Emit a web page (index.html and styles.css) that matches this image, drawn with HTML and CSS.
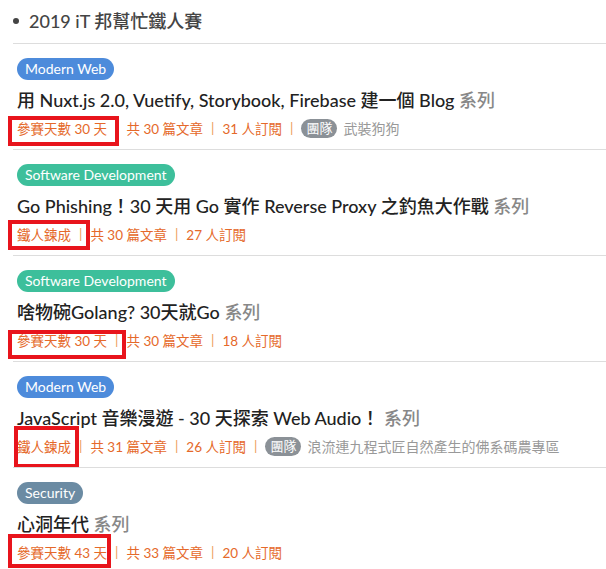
FILE: index.html
```html
<!DOCTYPE html>
<html lang="zh-Hant">
<head>
  <meta charset="UTF-8" />
  <meta name="viewport" content="width=device-width, initial-scale=1.0"/>
  <title>2019 iT 邦幫忙鐵人賽</title>
  <link rel="stylesheet" href="styles.css">
</head>
<body>
  <section class="ironman">
    <h2 class="ironman-title">2019 iT 邦幫忙鐵人賽</h2>

    <!-- Series list -->
    <div class="series">
      <div class="series-item">
        <span class="tag tag-web">Modern Web</span>
        <h3 class="series-title">用 Nuxt.js 2.0, Vuetify, Storybook, Firebase 建一個 Blog <span class="suffix">系列</span></h3>
        <div class="series-meta">
          <span>參賽天數 30 天</span><span class="sep">|</span>
          <span>共 30 篇文章</span><span class="sep">|</span>
          <span>31 人訂閱</span><span class="sep">|</span>
          <span class="team">團隊</span><span class="team-name">武裝狗狗</span>
        </div>
        <span class="mark mark-1"></span>
      </div>

      <div class="series-item">
        <span class="tag tag-dev">Software Development</span>
        <h3 class="series-title">Go Phishing！30 天用 Go 實作 Reverse Proxy 之釣魚大作戰 <span class="suffix">系列</span></h3>
        <div class="series-meta">
          <span>鐵人鍊成</span><span class="sep">|</span>
          <span>共 30 篇文章</span><span class="sep">|</span>
          <span>27 人訂閱</span>
        </div>
        <span class="mark mark-2"></span>
      </div>

      <div class="series-item">
        <span class="tag tag-dev">Software Development</span>
        <h3 class="series-title">啥物碗Golang? 30天就Go <span class="suffix">系列</span></h3>
        <div class="series-meta">
          <span>參賽天數 30 天</span><span class="sep">|</span>
          <span>共 30 篇文章</span><span class="sep">|</span>
          <span>18 人訂閱</span>
        </div>
        <span class="mark mark-3"></span>
      </div>

      <div class="series-item">
        <span class="tag tag-web">Modern Web</span>
        <h3 class="series-title">JavaScript 音樂漫遊 - 30 天探索 Web Audio！ <span class="suffix">系列</span></h3>
        <div class="series-meta">
          <span>鐵人鍊成</span><span class="sep">|</span>
          <span>共 31 篇文章</span><span class="sep">|</span>
          <span>26 人訂閱</span><span class="sep">|</span>
          <span class="team">團隊</span><span class="team-name">浪流連九程式匠自然產生的佛系碼農專區</span>
        </div>
        <span class="mark mark-4"></span>
      </div>

      <div class="series-item">
        <span class="tag tag-sec">Security</span>
        <h3 class="series-title">心洞年代 <span class="suffix">系列</span></h3>
        <div class="series-meta">
          <span>參賽天數 43 天</span><span class="sep">|</span>
          <span>共 33 篇文章</span><span class="sep">|</span>
          <span>20 人訂閱</span>
        </div>
        <span class="mark mark-5"></span>
      </div>
    </div>
  </section>
</body>
</html>
```

FILE: styles.css
```css
* {
  margin: 0;
  padding: 0;
  box-sizing: border-box;
}

body {
  background-color: #fff;
  color: #333;
  font-family: Lato, "Noto Sans CJK TC", sans-serif;
  overflow: hidden;
}

.ironman {
  margin-left: 13px;
}

.ironman-title {
  display: flex;
  align-items: center;
  gap: 10px;
  padding: 8px 0 9px;
  font-size: 18px;
  line-height: 26px;
  font-weight: 500;
  color: #444;
}

.ironman-title::before {
  content: "";
  width: 6px;
  height: 6px;
  border-radius: 50%;
  background-color: #444;
}

.series-item {
  position: relative;
  border-top: 1px solid #ddd;
  padding: 14px 4px 11px;
}

.tag {
  display: inline-block;
  height: 22px;
  line-height: 22px;
  padding: 0 8px;
  border-radius: 11px;
  font-size: 14px;
  color: #fff;
  vertical-align: top;
}

.tag-web {
  background-color: #4d8bdb;
}

.tag-dev {
  background-color: #3dbf9b;
}

.tag-sec {
  background-color: #6b8ba3;
}

.series-title {
  margin-top: 8px;
  font-size: 18px;
  line-height: 24px;
  font-weight: 500;
  color: #222;
}

.series-title .suffix {
  color: #888;
}

.series-meta {
  display: flex;
  align-items: center;
  margin-top: 6px;
  height: 20px;
  font-size: 13.5px;
  color: #e5692a;
  white-space: nowrap;
}

.sep {
  margin: 0 8px;
  color: #ee9a5c;
}

.team {
  height: 19px;
  line-height: 19px;
  padding: 0 5px;
  border-radius: 10px;
  background-color: #8b9197;
  color: #fff;
  font-size: 13px;
}

.team-name {
  margin-left: 6px;
  font-size: 14px;
  color: #999;
}

/* red annotation boxes */
.mark {
  position: absolute;
  left: -5px;
  border: 4px solid #e8141c;
}

.mark-1 {
  top: 72px;
  width: 111px;
  height: 30px;
}

.mark-2 {
  top: 70px;
  width: 82px;
  height: 30px;
}

.mark-3 {
  top: 74px;
  width: 118px;
  height: 29px;
}

.mark-4 {
  top: 64px;
  left: 1px;
  width: 65px;
  height: 42px;
}

.mark-5 {
  top: 66px;
  width: 103px;
  height: 34px;
}
```
